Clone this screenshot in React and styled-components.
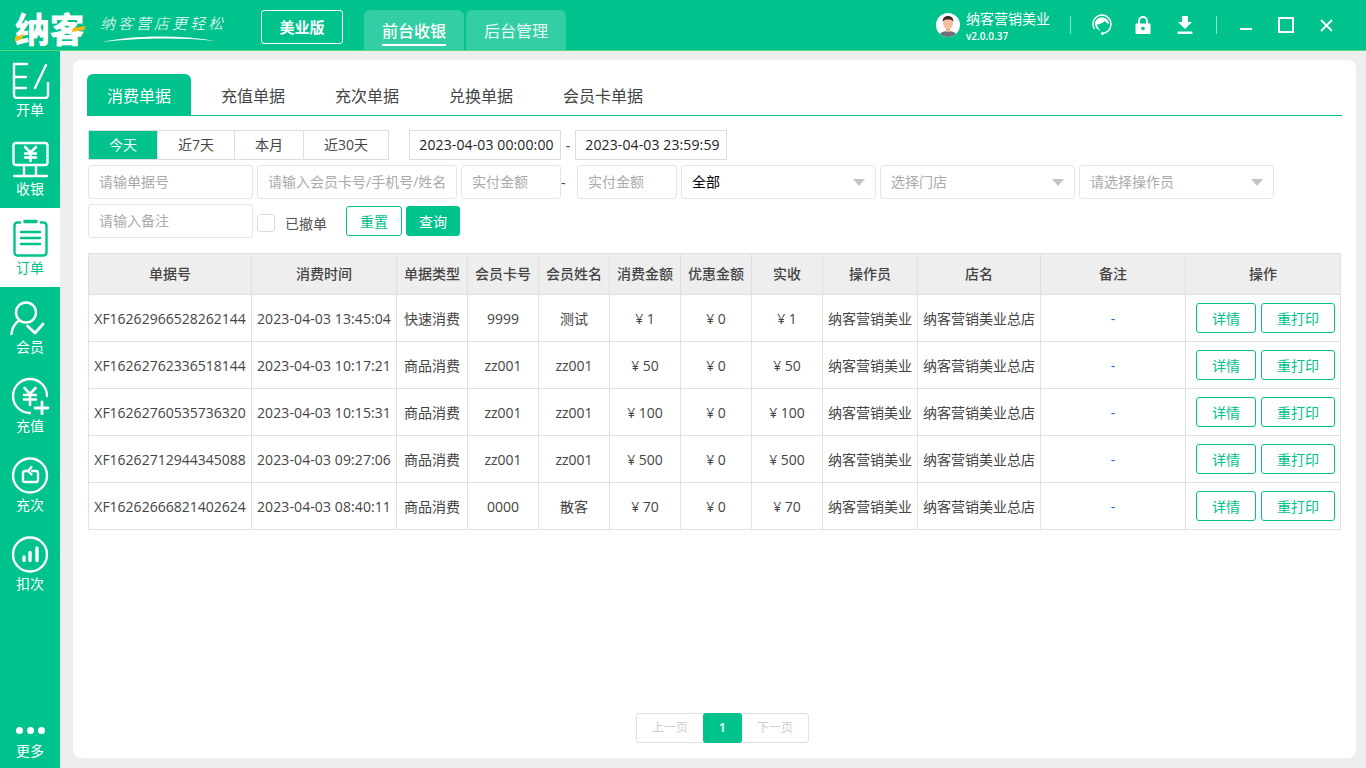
import React from "react";
import styled, { createGlobalStyle } from "styled-components";

const GREEN = "#00c28c";

const GlobalStyle = createGlobalStyle`
  * { box-sizing: border-box; }
  html, body { margin: 0; padding: 0; height: 100%; overflow: hidden; }
  body {
    font-family: "Open Sans", "Noto Sans CJK SC", sans-serif;
    font-size: 14px;
    color: #444;
    background: #eee;
  }
  input::placeholder { color: #aaa; opacity: 1; }
`;

const Shell = styled.div`
  width: 1366px;
  height: 768px;
  display: flex;
  flex-direction: column;
`;

const TitleBar = styled.header`
  height: 51px;
  flex: none;
  display: flex;
  align-items: flex-start;
  background: ${GREEN};
  border-bottom: 1px solid #4fdc7e;
  color: #fff;
`;

const Logo = styled.div`
  position: relative;
  width: 86px;
  margin-left: 15px;
  margin-top: 7px;
  font-size: 35px;
  line-height: 42px;
  font-weight: 900;
  letter-spacing: -0.5px;
  font-family: "Noto Sans CJK SC", sans-serif;
  white-space: nowrap;
`;

const LogoAccent = styled.svg`
  position: absolute;
  left: 0;
  top: 0;
`;

const Slogan = styled.div`
  width: 125px;
  margin-left: -1px;
  padding-top: 13px;
  font-family: "Noto Sans CJK SC", sans-serif;
  font-size: 15px;
  line-height: 20px;
  font-weight: 300;
  font-style: italic;
  letter-spacing: 3px;
  white-space: nowrap;
`;

const Swoosh = styled.svg`
  display: block;
  margin-top: 2px;
`;

const Edition = styled.div`
  width: 82px;
  height: 34px;
  margin: 10px 21px 0 36px;
  border: 1px solid #fff;
  border-radius: 3px;
  text-align: center;
  font-size: 15px;
  line-height: 31px;
  font-weight: 700;
  font-family: "Noto Sans CJK SC", sans-serif;
`;

const ModuleTab = styled.div`
  width: 100px;
  height: 40px;
  margin: 10px 2px 0 0;
  border-radius: 6px 6px 0 0;
  background: rgba(255, 255, 255, 0.2);
  text-align: center;
  font-size: 16px;
  padding-top: 8px;
  font-family: "Noto Sans CJK SC", sans-serif;
  font-weight: ${(p) => (p.$active ? 500 : 400)};
  color: ${(p) => (p.$active ? "#fff" : "rgba(255,255,255,.92)")};
`;

const ModuleLabel = styled.span`
  display: inline-block;
  line-height: 23px;
  height: 27px;
  border-bottom: ${(p) => (p.$active ? "2px solid #fff" : "none")};
`;

const RightBar = styled.div`
  margin-left: auto;
  display: flex;
  align-items: center;
  height: 50px;
  padding-right: 33px;
`;

const Avatar = styled.svg`
  margin-right: 6px;
`;

const UserInfo = styled.div`
  width: 104px;
  padding-top: 1px;
`;

const UserName = styled.div`
  font-size: 14px;
  line-height: 18px;
  margin-top: 1px;
`;

const Version = styled.div`
  font-size: 10px;
  font-weight: 600;
  line-height: 14px;
  margin-top: 1px;
`;

const Sep = styled.span`
  width: 1px;
  height: 18px;
  margin-left: ${(p) => p.$ml || 0}px;
  background: rgba(255, 255, 255, 0.55);
`;

const BarIcon = styled.svg`
  display: block;
  margin-left: ${(p) => p.$ml}px;
`;

const Body = styled.div`
  flex: 1;
  display: flex;
  min-height: 0;
`;

const Sidebar = styled.nav`
  width: 60px;
  flex: none;
  display: flex;
  flex-direction: column;
  background: ${GREEN};
`;

const NavItem = styled.div`
  height: 79px;
  flex: none;
  padding-top: 11px;
  display: flex;
  flex-direction: column;
  align-items: center;
  background: ${(p) => (p.$active ? "#fff" : "transparent")};
  color: ${(p) => (p.$active ? GREEN : "#fff")};
  font-family: "Noto Sans CJK SC", sans-serif;
  font-size: 14px;
  line-height: 20px;

  &:first-child {
    height: 78px;
    padding-top: 10px;
  }
`;

const NavIcon = styled.svg`
  display: block;
  height: 38px;
  width: 40px;
  flex: none;
`;

const MoreItem = styled.div`
  margin-top: auto;
  height: 43px;
  display: flex;
  flex-direction: column;
  align-items: center;
  color: #fff;
  font-family: "Noto Sans CJK SC", sans-serif;
  line-height: 20px;
`;

const Dots = styled.div`
  display: flex;
  gap: 4px;
  height: 15px;
  padding-top: 2px;
`;

const Dot = styled.i`
  width: 7px;
  height: 7px;
  border-radius: 50%;
  background: #fff;
`;

const Main = styled.main`
  flex: 1;
  padding: 9px 10px 10px 13px;
  min-width: 0;
`;

const Card = styled.section`
  height: 100%;
  background: #fff;
  border-radius: 8px;
  padding: 14px 14px 15px;
  display: flex;
  flex-direction: column;
`;

const Tabs = styled.div`
  display: flex;
  gap: 10px;
  height: 42px;
  flex: none;
  border-bottom: 1px solid ${GREEN};
`;

const Tab = styled.div`
  height: 41px;
  padding: 0 20px;
  line-height: 43px;
  font-size: 16px;
  font-family: "Noto Sans CJK SC", sans-serif;
  border-radius: 6px 6px 0 0;
  background: ${(p) => (p.$active ? GREEN : "transparent")};
  color: ${(p) => (p.$active ? "#fff" : "#444")};
`;

const Row = styled.div`
  display: flex;
  align-items: center;
  margin-top: ${(p) => p.$mt}px;
  margin-left: 1px;
  height: ${(p) => p.$h}px;
  flex: none;
`;

const Segments = styled.div`
  display: flex;
  height: 30px;
  border: 1px solid #ddd;
  margin-right: 20px;
`;

const Segment = styled.div`
  width: ${(p) => p.$w}px;
  text-align: center;
  line-height: 28px;
  border-left: ${(p) => (p.$first ? "none" : "1px solid #ddd")};
  background: ${(p) => (p.$active ? GREEN : "#fff")};
  color: ${(p) => (p.$active ? "#fff" : "#444")};
`;

const DateBox = styled.div`
  width: 152px;
  height: 30px;
  padding-left: 3px;
  border: 1px solid #ddd;
  text-align: center;
  line-height: 28px;
  letter-spacing: 0.12px;
  white-space: nowrap;
  color: #222;
`;

const Dash = styled.span`
  width: ${(p) => p.$w}px;
  text-align: ${(p) => (p.$left ? "left" : "center")};
  color: #444;
`;

const Field = styled.input`
  width: ${(p) => p.$w}px;
  height: 34px;
  margin-right: ${(p) => p.$mr ?? 4}px;
  padding: 0 10px 2px;
  border: 1px solid #e5e5e5;
  border-radius: 3px;
  outline: none;
  font: inherit;
  color: #000;
  background: #fff;
`;

const SelectBox = styled.div`
  position: relative;
  width: 195px;
  height: 34px;
  margin-right: 4px;
  padding: 0 10px;
  border: 1px solid #e5e5e5;
  border-radius: 3px;
  line-height: 32px;
  color: ${(p) => (p.$value ? "#000" : "#aaa")};

  &::after {
    content: "";
    position: absolute;
    right: 10px;
    top: 13px;
    border-left: 6px solid transparent;
    border-right: 6px solid transparent;
    border-top: 7px solid #c4c4c4;
  }
`;

const CheckBox = styled.span`
  width: 18px;
  height: 18px;
  margin-top: 4px;
  border: 1px solid #ddd;
  border-radius: 3px;
`;

const CheckLabel = styled.span`
  margin: 4px 19px 0 10px;
  color: #555;
`;

const ActionBtn = styled.button`
  width: ${(p) => p.$w}px;
  height: 30px;
  margin: ${(p) => p.$m || 0};
  border: 1px solid ${GREEN};
  border-radius: 3px;
  padding: 0;
  font: inherit;
  background: ${(p) => (p.$fill ? GREEN : "#fff")};
  color: ${(p) => (p.$fill ? "#fff" : GREEN)};
`;

const Table = styled.table`
  width: 1253px;
  margin: 15px 0 0 1px;
  border-collapse: collapse;
  table-layout: fixed;
  flex: none;
`;

const Th = styled.th`
  height: 41px;
  padding: 0 0 2px;
  background: #eee;
  border: 1px solid #e0e0e0;
  font-weight: 500;
  color: #444;
  font-family: "Noto Sans CJK SC", sans-serif;
`;

const Td = styled.td`
  height: 47px;
  padding: 0;
  border: 1px solid #e0e0e0;
  text-align: center;
  white-space: nowrap;
  letter-spacing: ${(p) => (p.$spaced ? "0.1px" : "normal")};
  color: ${(p) => p.$color || "#444"};
`;

const OpCell = styled.div`
  display: flex;
  padding-left: 10px;
  gap: 5px;
`;

const Pager = styled.div`
  margin-top: auto;
  align-self: center;
  display: flex;
  width: 173px;
  height: 30px;
  margin-left: 16px;
  border: 1px solid #e0e0e0;
  border-radius: 3px;
`;

const PagerText = styled.div`
  flex: 1;
  text-align: center;
  font-size: 12px;
  line-height: 28px;
  color: #ccc;
`;

const PagerNum = styled.div`
  width: 39px;
  height: 30px;
  margin: -1px 0;
  border-radius: 3px;
  background: ${GREEN};
  color: #fff;
  text-align: center;
  line-height: 30px;
  font-size: 12px;
  font-weight: 600;
`;

const columns = [
  { w: 163, t: "单据号" },
  { w: 145, t: "消费时间" },
  { w: 71, t: "单据类型" },
  { w: 71, t: "会员卡号" },
  { w: 71, t: "会员姓名" },
  { w: 71, t: "消费金额" },
  { w: 71, t: "优惠金额" },
  { w: 71, t: "实收" },
  { w: 95, t: "操作员" },
  { w: 123, t: "店名" },
  { w: 145, t: "备注" },
  { w: 155, t: "操作" },
];

const rows = [
  ["XF16262966528262144", "2023-04-03 13:45:04", "快速消费", "9999", "测试", "¥ 1", "¥ 1"],
  ["XF16262762336518144", "2023-04-03 10:17:21", "商品消费", "zz001", "zz001", "¥ 50", "¥ 50"],
  ["XF16262760535736320", "2023-04-03 10:15:31", "商品消费", "zz001", "zz001", "¥ 100", "¥ 100"],
  ["XF16262712944345088", "2023-04-03 09:27:06", "商品消费", "zz001", "zz001", "¥ 500", "¥ 500"],
  ["XF16262666821402624", "2023-04-03 08:40:11", "商品消费", "0000", "散客", "¥ 70", "¥ 70"],
];

const stroke = { fill: "none", stroke: "currentColor", strokeWidth: 2.4, strokeLinecap: "round", strokeLinejoin: "round" };

const navIcons = {
  open: (
    <g {...stroke}>
      <path d="M4 3H17M4 16H16M4 27H16" />
      <path d="M4 3V34a3 3 0 0 0 3 3H35a3 3 0 0 0 3-3V22" />
      <path d="M36 4L25 27" />
    </g>
  ),
  cash: (
    <g {...stroke}>
      <rect x="3.500" y="3" width="34" height="22" rx="2.500" />
      <path d="M14 25V35.500M26 25V35.500M4 36H37" />
      <path d="M15 7l5.500 5.500L26 7M15 13.500H26M15 17.500H26M20.500 12.500V21" strokeWidth="2.600" />
    </g>
  ),
  order: (
    <g {...stroke}>
      <path d="M10 3.500H7.500a3 3 0 0 0-3 3V33.500a3 3 0 0 0 3 3H33.500a3 3 0 0 0 3-3V6.500a3 3 0 0 0-3-3H31" />
      <path d="M15 2.500H26" strokeWidth="3.600" />
      <path d="M11 13H30M11 19H30M11 25H30" />
    </g>
  ),
  member: (
    <g {...stroke}>
      <circle cx="16" cy="14.500" r="10" />
      <path d="M1.500 36C2 30 4 26 9 22.500" />
      <path d="M17.500 28L25 35L33 26" strokeWidth="2.800" />
    </g>
  ),
  recharge: (
    <g {...stroke}>
      <path d="M37 19A17 17 0 1 0 20 36" />
      <path d="M14.500 11l5.500 6 5.500-6M14 18H26M14 22.500H26M20 17V28" strokeWidth="2.600" />
      <path d="M32 25V37M25 31H38" strokeWidth="2.800" />
    </g>
  ),
  times: (
    <g {...stroke}>
      <circle cx="20" cy="19.500" r="17" />
      <path d="M18 15H15a2 2 0 0 0-2 2V24a2 2 0 0 0 2 2H26a2 2 0 0 0 2-2V17a2 2 0 0 0-2-2H22" />
      <path d="M21.500 11l-3.500 4 3.500 3.500" />
    </g>
  ),
  deduct: (
    <g {...stroke}>
      <circle cx="20" cy="19.500" r="17" />
      <path d="M14 22V25.500M20 17.500V25.500M27 13V25.500" strokeWidth="3.400" />
    </g>
  ),
};

const navItems = [
  { key: "open", label: "开单" },
  { key: "cash", label: "收银" },
  { key: "order", label: "订单", active: true },
  { key: "member", label: "会员" },
  { key: "recharge", label: "充值" },
  { key: "times", label: "充次" },
  { key: "deduct", label: "扣次" },
];

export default function App() {
  return (
    <Shell>
      <GlobalStyle />
      <TitleBar>
        <Logo>
          纳客
          <LogoAccent width="86" height="42" viewBox="0 0 86 42">
            <path d="M0 30l9-3-2 5-8 3z" fill="#f5b915" />
            <path d="M58 21l13-2-2 4-12 2z" fill="#f5b915" />
          </LogoAccent>
        </Logo>
        <Slogan>
          纳客营店更轻松
          <Swoosh width="118" height="8" viewBox="0 0 118 8">
            <path d="M2 7C30 1 75 -1 116 6C80 2 35 3 2 7Z" fill="#fff" />
          </Swoosh>
        </Slogan>
        <Edition>美业版</Edition>
        <ModuleTab $active>
          <ModuleLabel $active>前台收银</ModuleLabel>
        </ModuleTab>
        <ModuleTab>
          <ModuleLabel>后台管理</ModuleLabel>
        </ModuleTab>
        <RightBar>
          <Avatar width="24" height="24" viewBox="0 0 24 24">
            <defs>
              <clipPath id="av">
                <circle cx="12" cy="12" r="12" />
              </clipPath>
            </defs>
            <circle cx="12" cy="12" r="12" fill="#fff" />
            <g clipPath="url(#av)">
              <path d="M3 24c0-4 4-6 9-6s9 2 9 6z" fill="#6d7278" />
              <rect x="10" y="14" width="4" height="5" fill="#eab08e" />
              <ellipse cx="12" cy="10.500" rx="4.800" ry="5.800" fill="#f3bf9f" />
              <path d="M6.800 9c-.5-4 2-6 5.200-6s5.800 2 5.200 6c-1-2-2-2.500-5.200-2.500S7.800 7 6.800 9z" fill="#3b2a22" />
            </g>
          </Avatar>
          <UserInfo>
            <UserName>纳客营销美业</UserName>
            <Version>v2.0.0.37</Version>
          </UserInfo>
          <Sep />
          <BarIcon $ml={20} width="22" height="22" viewBox="0 0 22 22">
            <path d="M3.500 15A9 9 0 1 1 19.800 12C19 16 16 18.500 12.500 19.300" fill="none" stroke="#fff" strokeWidth="1.400" />
            <path d="M4 10c0-4 3-6.500 7-6.500s7 2.500 7 6.500c-2-.5-3.500-2-4.500-3-1.500 2-5 3.500-7.500 3.500.5 2.500 2 5 4 6-3-.5-6-3-6-6.500z" fill="#fff" />
            <circle cx="11.500" cy="19.500" r="1.500" fill="#fff" />
          </BarIcon>
          <BarIcon $ml={21} width="18" height="20" viewBox="0 0 18 20">
            <path d="M5 9V6a4 4 0 0 1 8 0v3" fill="none" stroke="#fff" strokeWidth="2" />
            <path d="M2.500 8.500h13a1 1 0 0 1 1 1V18a1 1 0 0 1-1 1h-13a1 1 0 0 1-1-1V9.500a1 1 0 0 1 1-1z" fill="#fff" />
            <circle cx="9" cy="13.500" r="1.800" fill={GREEN} />
          </BarIcon>
          <BarIcon $ml={24} width="18" height="20" viewBox="0 0 18 20">
            <path d="M6 1h6v6h4l-7 7-7-7h4z" fill="#fff" />
            <rect x="1.500" y="16.500" width="15" height="2.500" rx="1" fill="#fff" />
          </BarIcon>
          <Sep $ml={22} />
          <BarIcon $ml={22} width="14" height="14" viewBox="0 0 14 14">
            <rect x="1" y="10" width="12" height="2" fill="#fff" />
          </BarIcon>
          <BarIcon $ml={25} width="16" height="16" viewBox="0 0 16 16">
            <rect x="1" y="1" width="14" height="14" fill="none" stroke="#fff" strokeWidth="2" />
          </BarIcon>
          <BarIcon $ml={26} width="13" height="13" viewBox="0 0 13 13">
            <path d="M1 1L12 12M12 1L1 12" stroke="#fff" strokeWidth="1.800" />
          </BarIcon>
        </RightBar>
      </TitleBar>
      <Body>
        <Sidebar>
          {navItems.map((item) => (
            <NavItem key={item.key} $active={item.active}>
              <NavIcon viewBox="0 0 40 38">{navIcons[item.key]}</NavIcon>
              {item.label}
            </NavItem>
          ))}
          <MoreItem>
            <Dots>
              <Dot />
              <Dot />
              <Dot />
            </Dots>
            更多
          </MoreItem>
        </Sidebar>
        <Main>
          <Card>
            <Tabs>
              <Tab $active>消费单据</Tab>
              <Tab>充值单据</Tab>
              <Tab>充次单据</Tab>
              <Tab>兑换单据</Tab>
              <Tab>会员卡单据</Tab>
            </Tabs>
            <Row $mt={14} $h={30}>
              <Segments>
                <Segment $first $active $w={68}>今天</Segment>
                <Segment $w={77}>近7天</Segment>
                <Segment $w={69}>本月</Segment>
                <Segment $w={85}>近30天</Segment>
              </Segments>
              <DateBox>2023-04-03 00:00:00</DateBox>
              <Dash $w={14}>-</Dash>
              <DateBox>2023-04-03 23:59:59</DateBox>
            </Row>
            <Row $mt={5} $h={34}>
              <Field $w={165} placeholder="请输单据号" />
              <Field $w={200} placeholder="请输入会员卡号/手机号/姓名" />
              <Field $w={100} $mr={0} placeholder="实付金额" />
              <Dash $w={16} $left>-</Dash>
              <Field $w={100} placeholder="实付金额" />
              <SelectBox $value>全部</SelectBox>
              <SelectBox>选择门店</SelectBox>
              <SelectBox>请选择操作员</SelectBox>
            </Row>
            <Row $mt={5} $h={34}>
              <Field $w={165} placeholder="请输入备注" />
              <CheckBox />
              <CheckLabel>已撤单</CheckLabel>
              <ActionBtn $w={56}>重置</ActionBtn>
              <ActionBtn $w={54} $fill $m="0 0 0 4px">查询</ActionBtn>
            </Row>
            <Table>
              <colgroup>
                {columns.map((c) => (
                  <col key={c.t} width={c.w} />
                ))}
              </colgroup>
              <thead>
                <tr>
                  {columns.map((c) => (
                    <Th key={c.t}>{c.t}</Th>
                  ))}
                </tr>
              </thead>
              <tbody>
                {rows.map((r) => (
                  <tr key={r[0]}>
                    <Td>{r[0]}</Td>
                    <Td $spaced>{r[1]}</Td>
                    <Td>{r[2]}</Td>
                    <Td>{r[3]}</Td>
                    <Td>{r[4]}</Td>
                    <Td>{r[5]}</Td>
                    <Td>¥ 0</Td>
                    <Td>{r[6]}</Td>
                    <Td>纳客营销美业</Td>
                    <Td>纳客营销美业总店</Td>
                    <Td $color="#1473d2">-</Td>
                    <Td>
                      <OpCell>
                        <ActionBtn $w={60}>详情</ActionBtn>
                        <ActionBtn $w={74}>重打印</ActionBtn>
                      </OpCell>
                    </Td>
                  </tr>
                ))}
              </tbody>
            </Table>
            <Pager>
              <PagerText>上一页</PagerText>
              <PagerNum>1</PagerNum>
              <PagerText>下一页</PagerText>
            </Pager>
          </Card>
        </Main>
      </Body>
    </Shell>
  );
}
